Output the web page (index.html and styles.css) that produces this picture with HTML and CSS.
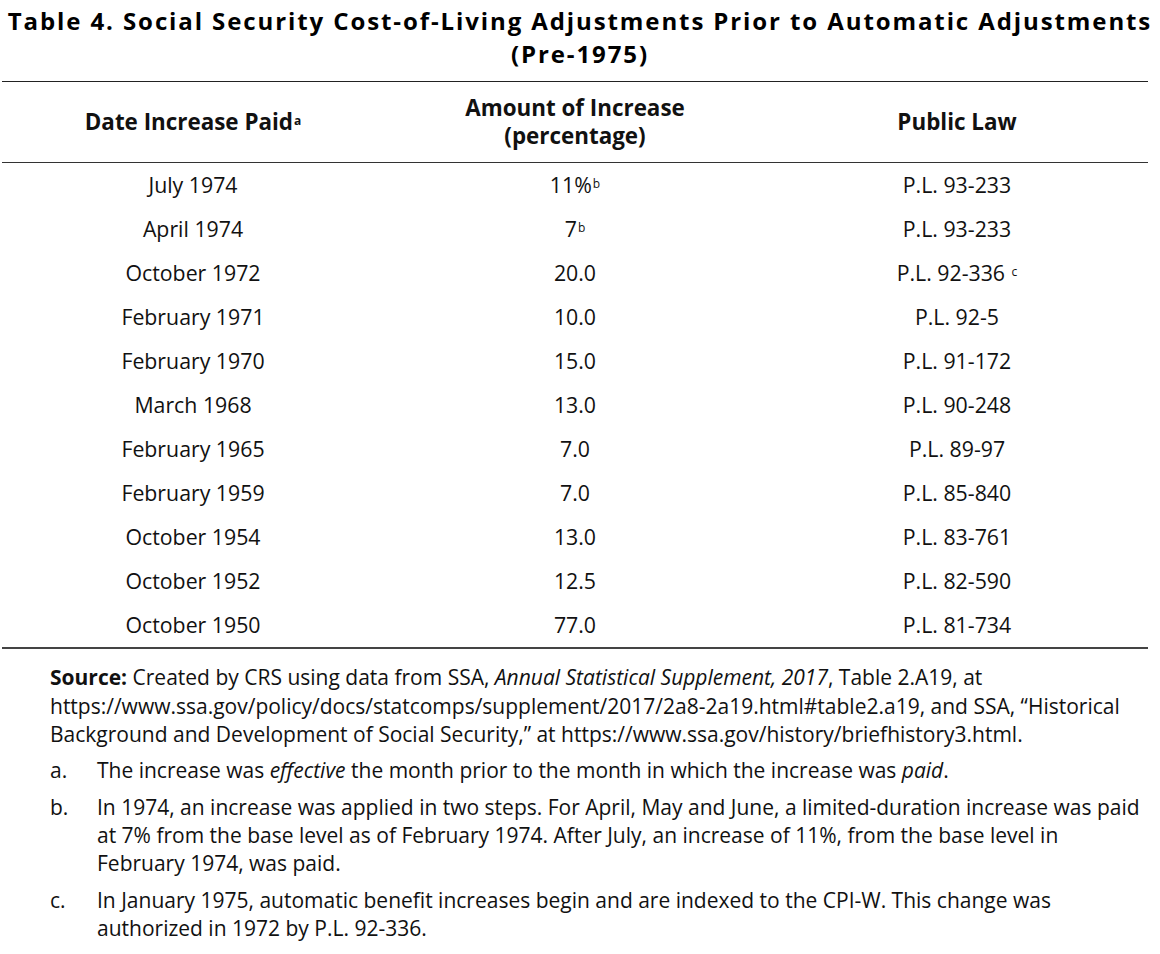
FILE: index.html
```html
<!DOCTYPE html>
<html lang="en">
<head>
<meta charset="utf-8">
<title>Table 4</title>
<link rel="stylesheet" href="styles.css">
</head>
<body>
<div class="page">
  <h1 class="title">Table 4. Social Security Cost-of-Living Adjustments Prior to Automatic Adjustments<br>(Pre-1975)</h1>
  <table class="data">
    <thead>
      <tr>
        <th>Date Increase Paid<sup>a</sup></th>
        <th>Amount of Increase<br>(percentage)</th>
        <th>Public Law</th>
      </tr>
    </thead>
    <tbody>
      <tr><td>July 1974</td><td>11%<sup>b</sup></td><td>P.L. 93-233</td></tr>
      <tr><td>April 1974</td><td>7<sup>b</sup></td><td>P.L. 93-233</td></tr>
      <tr><td>October 1972</td><td>20.0</td><td>P.L. 92-336 <sup>c</sup></td></tr>
      <tr><td>February 1971</td><td>10.0</td><td>P.L. 92-5</td></tr>
      <tr><td>February 1970</td><td>15.0</td><td>P.L. 91-172</td></tr>
      <tr><td>March 1968</td><td>13.0</td><td>P.L. 90-248</td></tr>
      <tr><td>February 1965</td><td>7.0</td><td>P.L. 89-97</td></tr>
      <tr><td>February 1959</td><td>7.0</td><td>P.L. 85-840</td></tr>
      <tr><td>October 1954</td><td>13.0</td><td>P.L. 83-761</td></tr>
      <tr><td>October 1952</td><td>12.5</td><td>P.L. 82-590</td></tr>
      <tr><td>October 1950</td><td>77.0</td><td>P.L. 81-734</td></tr>
    </tbody>
  </table>
  <div class="notes">
    <p class="source"><b>Source:</b> Created by CRS using data from SSA, <i>Annual Statistical Supplement, 2017</i>, Table 2.A19, at<br>https://www.ssa.gov/policy/docs/statcomps/supplement/2017/2a8-2a19.html#table2.a19, and SSA, “Historical<br>Background and Development of Social Security,” at https://www.ssa.gov/history/briefhistory3.html.</p>
    <div class="note"><span class="lbl">a.</span><span class="txt">The increase was <i>effective</i> the month prior to the month in which the increase was <i>paid</i>.</span></div>
    <div class="note"><span class="lbl">b.</span><span class="txt">In 1974, an increase was applied in two steps. For April, May and June, a limited-duration increase was paid<br>at 7% from the base level as of February 1974. After July, an increase of 11%, from the base level in<br>February 1974, was paid.</span></div>
    <div class="note"><span class="lbl">c.</span><span class="txt">In January 1975, automatic benefit increases begin and are indexed to the CPI-W. This change was<br>authorized in 1972 by P.L. 92-336.</span></div>
  </div>
</div>
</body>
</html>
```

FILE: styles.css
```css
html, body {
  margin: 0;
  padding: 0;
  background: #fff;
}
body {
  font-family: "Open Sans", Lato, sans-serif;
  color: #111;
}
.page {
  width: 1160px;
  padding-top: 4px;
}
.title {
  margin: 0;
  font-size: 24px;
  letter-spacing: 1.9px;
  line-height: 33px;
  font-weight: 700;
  text-align: center;
  color: #000;
  white-space: nowrap;
}
.data {
  margin: 11px 0 0 2px;
  width: 1146px;
  border-collapse: collapse;
  table-layout: fixed;
  font-size: 21.3px;
}
.data th {
  font-size: 22.4px;
  font-weight: 700;
  height: 80px;
  line-height: 28px;
  padding: 0;
  border-top: 1px solid #222;
  border-bottom: 1px solid #333;
  vertical-align: middle;
}
.data th sup {
  font-weight: 700;
}
.data td {
  height: 44px;
  padding: 0;
  text-align: center;
  line-height: 24px;
}
.data tbody tr:last-child td {
  border-bottom: 2px solid #444;
}
sup {
  font-size: 12px;
  font-weight: 400;
  vertical-align: 5px;
  line-height: 0;
  margin-left: 1px;
}
.notes {
  padding: 14px 0 0 50px;
  font-size: 21px;
  line-height: 28.5px;
  white-space: nowrap;
}
.source {
  margin: 0 0 7px;
}
.note {
  display: grid;
  grid-template-columns: 47px 1fr;
  line-height: 28px;
  margin-bottom: 9px;
}
```
